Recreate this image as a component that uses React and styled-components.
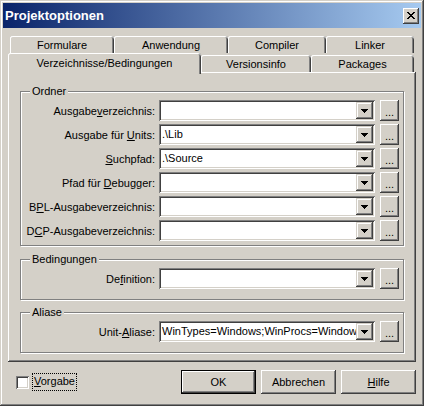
import React from "react";
import styled, { createGlobalStyle } from "styled-components";

const GlobalStyle = createGlobalStyle`
  html, body {
    margin: 0;
    padding: 0;
    background: #d4d0c8;
  }
  body {
    font-family: "Liberation Sans", Arial, sans-serif;
    font-size: 11px;
    color: #000;
  }
  * {
    box-sizing: border-box;
  }
`;

const raised = `
  box-shadow: inset -1px -1px #404040, inset 1px 1px #fff,
    inset -2px -2px #808080, inset 2px 2px #d4d0c8;
`;

const Window = styled.div`
  width: 424px;
  height: 406px;
  padding: 3px;
  background: #d4d0c8;
  box-shadow: inset -1px -1px #404040, inset 1px 1px #d4d0c8,
    inset -2px -2px #808080, inset 2px 2px #fff;
  display: flex;
  flex-direction: column;
`;

const TitleBar = styled.div`
  height: 25px;
  display: flex;
  align-items: center;
  justify-content: space-between;
  padding: 0 2px;
  background: linear-gradient(to right, #0a246a, #a6caf0);
`;

const Title = styled.span`
  color: #fff;
  font-weight: bold;
  font-size: 13px;
`;

const CloseButton = styled.div`
  width: 16px;
  height: 16px;
  background: #d4d0c8;
  ${raised}
  display: flex;
  align-items: center;
  justify-content: center;
`;

const Content = styled.div`
  flex: 1;
  padding: 8px 5px 0 5px;
  display: flex;
  flex-direction: column;
`;

const TabRow = styled.div`
  display: flex;
  align-items: flex-end;
  height: ${(p) => p.$h}px;
  padding-left: ${(p) => p.$indent}px;
`;

const Tab = styled.div`
  position: relative;
  z-index: ${(p) => (p.$active ? 1 : 0)};
  width: ${(p) => p.$w}px;
  height: ${(p) => (p.$active ? 21 : 17)}px;
  margin-bottom: ${(p) => (p.$active ? -2 : 0)}px;
  padding-bottom: ${(p) => (p.$active ? 2 : 0)}px;
  background: #d4d0c8;
  border-radius: 3px 3px 0 0;
  box-shadow: inset 1px 0 #fff, inset 0 1px #fff, inset -1px 0 #404040,
    inset -2px 0 #808080;
  display: flex;
  align-items: center;
  justify-content: center;
  white-space: nowrap;
`;

const Panel = styled.div`
  height: 290px;
  padding: 19px 12px 0 12px;
  ${raised}
  display: flex;
  flex-direction: column;
`;

const Group = styled.div`
  border: 1px solid #808080;
  box-shadow: inset 1px 1px #fff, 1px 1px #fff;
  margin-top: ${(p) => p.$top || 0}px;
  padding: 0 0 ${(p) => p.$bottom}px 0;
  display: flex;
  flex-direction: column;
`;

const GroupTitle = styled.div`
  align-self: flex-start;
  margin: -7px 0 0 9px;
  padding: 0 2px;
  line-height: 13px;
  background: #d4d0c8;
`;

const Rows = styled.div`
  margin-top: 2px;
  display: flex;
  flex-direction: column;
  gap: 3px;
`;

const Row = styled.div`
  display: flex;
  align-items: center;
  height: 21px;
`;

const Label = styled.label`
  width: 134px;
  text-align: right;
  margin-right: 4px;
  white-space: nowrap;
`;

const Combo = styled.div`
  width: 216px;
  height: 21px;
  padding: 2px;
  background: #fff;
  box-shadow: inset 1px 1px #808080, inset -1px -1px #fff,
    inset 2px 2px #404040, inset -2px -2px #d4d0c8;
  display: flex;
`;

const ComboText = styled.div`
  flex: 1;
  overflow: hidden;
  white-space: nowrap;
  padding-left: 1px;
  line-height: 17px;
`;

const DropButton = styled.div`
  width: 17px;
  height: 17px;
  background: #d4d0c8;
  box-shadow: inset -1px -1px #404040, inset 1px 1px #d4d0c8,
    inset -2px -2px #808080, inset 2px 2px #fff;
  display: flex;
  align-items: center;
  justify-content: center;
`;

const DotsButton = styled.div`
  width: 19px;
  height: 21px;
  margin-left: 5px;
  background: #d4d0c8;
  ${raised}
  display: flex;
  align-items: center;
  justify-content: center;
  padding-top: 2px;
`;

const Footer = styled.div`
  margin-top: 8px;
  height: 24px;
  display: flex;
  align-items: center;
`;

const CheckBox = styled.div`
  width: 13px;
  height: 13px;
  margin-left: 8px;
  background: #fff;
  box-shadow: inset 1px 1px #808080, inset -1px -1px #fff,
    inset 2px 2px #404040, inset -2px -2px #d4d0c8;
`;

const CheckLabel = styled.span`
  margin-left: 4px;
  padding: 1px 1px 2px 1px;
  outline: 1px dotted #000;
  line-height: 13px;
`;

const Spacer = styled.div`
  flex: 1;
`;

const Button = styled.div`
  width: 75px;
  height: 24px;
  margin-left: ${(p) => p.$gap}px;
  background: #d4d0c8;
  display: flex;
  align-items: center;
  justify-content: center;
  ${(p) =>
    p.$default
      ? `box-shadow: inset 0 0 0 1px #000, inset -2px -2px #404040, inset 2px 2px #fff,
    inset -3px -3px #808080;`
      : raised}
`;

const closePattern = [
  "XX....XX",
  ".XX..XX.",
  "..XXXX..",
  "...XX...",
  "..XXXX..",
  ".XX..XX.",
  "XX....XX",
];

function CloseGlyph() {
  return (
    <svg width="8" height="7" viewBox="0 0 8 7" shapeRendering="crispEdges">
      {closePattern.map((line, y) =>
        line
          .split("")
          .map((c, x) =>
            c === "X" ? <rect key={x + "-" + y} x={x} y={y} width="1" height="1" fill="#000" /> : null
          )
      )}
    </svg>
  );
}

function Arrow() {
  return (
    <svg width="7" height="4" viewBox="0 0 7 4" shapeRendering="crispEdges">
      <path d="M0 0h7v1h-1v1h-1v1h-1v1h-1v-1h-1v-1h-1v-1h-1z" fill="#000" />
    </svg>
  );
}

function Field({ label, value }) {
  return (
    <Row>
      <Label>{label}</Label>
      <Combo>
        <ComboText>{value}</ComboText>
        <DropButton>
          <Arrow />
        </DropButton>
      </Combo>
      <DotsButton>...</DotsButton>
    </Row>
  );
}

const backTabs = [
  { name: "Formulare", w: 104 },
  { name: "Anwendung", w: 114 },
  { name: "Compiler", w: 98 },
  { name: "Linker", w: 88 },
];

const frontTabs = [
  { name: "Verzeichnisse/Bedingungen", w: 193, active: true },
  { name: "Versionsinfo", w: 110 },
  { name: "Packages", w: 103 },
];

const ordner = [
  { label: <>Ausgabe<u>v</u>erzeichnis:</>, value: "" },
  { label: <>Ausgabe für <u>U</u>nits:</>, value: ".\\Lib" },
  { label: <><u>S</u>uchpfad:</>, value: ".\\Source" },
  { label: <>Pfad für <u>D</u>ebugger:</>, value: "" },
  { label: <>B<u>P</u>L-Ausgabeverzeichnis:</>, value: "" },
  { label: <>D<u>C</u>P-Ausgabeverzeichnis:</>, value: "" },
];

export default function App() {
  return (
    <>
      <GlobalStyle />
      <Window>
        <TitleBar>
          <Title>Projektoptionen</Title>
          <CloseButton>
            <CloseGlyph />
          </CloseButton>
        </TitleBar>
        <Content>
          <TabRow $h={17} $indent={2}>
            {backTabs.map((t) => (
              <Tab key={t.name} $w={t.w}>
                {t.name}
              </Tab>
            ))}
          </TabRow>
          <TabRow $h={19} $indent={0}>
            {frontTabs.map((t) => (
              <Tab key={t.name} $w={t.w} $active={t.active}>
                {t.name}
              </Tab>
            ))}
          </TabRow>
          <Panel>
            <Group $bottom={4}>
              <GroupTitle>Ordner</GroupTitle>
              <Rows>
                {ordner.map((f, i) => (
                  <Field key={i} label={f.label} value={f.value} />
                ))}
              </Rows>
            </Group>
            <Group $top={13} $bottom={10}>
              <GroupTitle>Bedingungen</GroupTitle>
              <Rows>
                <Field label={<>De<u>f</u>inition:</>} value="" />
              </Rows>
            </Group>
            <Group $top={12} $bottom={10}>
              <GroupTitle>Aliase</GroupTitle>
              <Rows>
                <Field
                  label={<>Unit-<u>A</u>liase:</>}
                  value="WinTypes=Windows;WinProcs=Window"
                />
              </Rows>
            </Group>
          </Panel>
          <Footer>
            <CheckBox />
            <CheckLabel>
              <u>V</u>orgabe
            </CheckLabel>
            <Spacer />
            <Button $default $gap={0}>OK</Button>
            <Button $gap={5}>Abbrechen</Button>
            <Button $gap={5}>
              <u>H</u>ilfe
            </Button>
          </Footer>
        </Content>
      </Window>
    </>
  );
}
